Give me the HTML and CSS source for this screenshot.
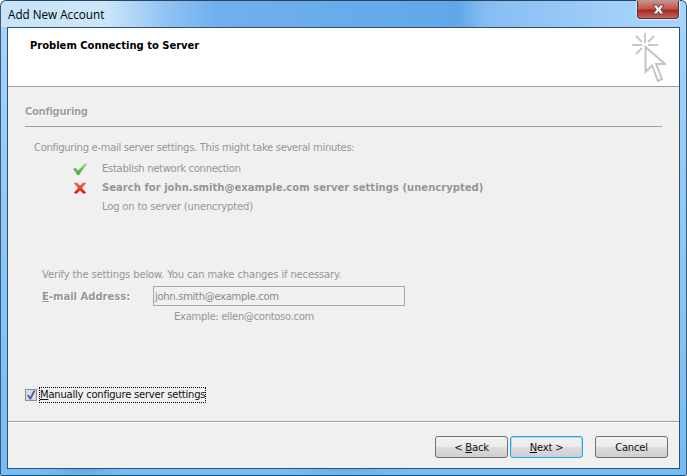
FILE: index.html
```html
<!DOCTYPE html>
<html lang="en">
<head>
<meta charset="utf-8">
<title>Add New Account</title>
<link rel="stylesheet" href="styles.css">
</head>
<body>
<div class="window">
  <div class="titlebar">
    <span class="title">Add New Account</span>
    <div class="close">
      <svg width="19" height="11" viewBox="0 0 19 11"><path d="M4 1h4l1.500 2.500L11 1h4l-3.200 4.500L15 10h-4L9.500 7.500 8 10H4l3.200-4.500z" fill="#f4f4f4" stroke="#5a4a4a" stroke-width="1"/></svg>
    </div>
  </div>
  <div class="client">
    <header class="banner">
      <h1 class="banner-title">Problem Connecting to Server</h1>
      <svg class="banner-icon" width="34" height="50" viewBox="0 0 34 50" fill="none">
        <path d="M13 0v10M0 12h10M16 12h10M4 3l6 6M22 3l-6 6M4 21l6-6" stroke="#c8c8c8" stroke-width="2"/>
        <path d="M13.500 14V39L20 32.500 26 48l4-2-6-15H33z" fill="#fff" stroke="#c4c4c4" stroke-width="2"/>
      </svg>
    </header>
    <main class="content">
      <h2 class="section">Configuring</h2>
      <p class="intro">Configuring e-mail server settings. This might take several minutes:</p>
      <ul class="tasks">
        <li class="task">
          <svg class="mark" width="14" height="12" viewBox="0 0 14 12">
            <defs><linearGradient id="okfill" x1="0" y1="0" x2="0" y2="1"><stop offset="0" stop-color="#98da80"/><stop offset="1" stop-color="#40ac38"/></linearGradient></defs>
            <path d="M0 6l2.500-1.500 2.500 3L12.500 0 14 1 6 12H4.500z" fill="url(#okfill)"/>
          </svg>
          <span>Establish network connection</span>
        </li>
        <li class="task task-bold">
          <svg class="mark" width="14" height="12" viewBox="0 0 14 12">
            <defs><linearGradient id="errfill" x1="0" y1="0" x2="0" y2="1"><stop offset="0" stop-color="#f47058"/><stop offset="1" stop-color="#e01808"/></linearGradient></defs>
            <path d="M2 .5l2 0L7 3.500 10 .5h2L13 1.500 9 6l4 4.500-1 1H10L7 8.500 4 11.500H2l-1-1L5 6 1 1.500z" fill="url(#errfill)"/>
          </svg>
          <span>Search for john.smith@example.com server settings (unencrypted)</span>
        </li>
        <li class="task task-wide">
          <span class="mark"></span>
          <span>Log on to server (unencrypted)</span>
        </li>
      </ul>
      <section class="verify">
        <p class="verify-text">Verify the settings below. You can make changes if necessary.</p>
        <div class="field">
          <label class="field-label"><u>E</u>-mail Address:</label>
          <div class="input">john.smith@example.com</div>
        </div>
        <p class="hint">Example: ellen@contoso.com</p>
      </section>
      <label class="manual">
        <span class="checkbox">
          <svg width="10" height="10" viewBox="0 0 10 10"><path d="M1 5l2 0 1.200 2L7.500 .5h2L5 9.500H3.500z" fill="#4a5ea8"/></svg>
        </span>
        <span class="manual-text"><u>M</u>anually configure server settings</span>
      </label>
    </main>
    <footer class="footer">
      <button class="btn btn-back">&lt; <u>B</u>ack</button>
      <button class="btn btn-default"><u>N</u>ext &gt;</button>
      <button class="btn btn-cancel">Cancel</button>
    </footer>
  </div>
</div>
</body>
</html>
```
FILE: styles.css
```css
* { box-sizing: border-box; }
html, body { margin: 0; padding: 0; }
body { width: 687px; height: 476px; overflow: hidden; }
.window {
  width: 687px; height: 476px;
  display: flex; flex-direction: column;
  padding: 0 6px 6px 6px;
  border: 1px solid #3a5a74;
  border-top-color: #2a4560;
  border-bottom-color: #1f5068;
  border-radius: 6px 6px 2px 2px;
  background:
    radial-gradient(ellipse 40px 8px at 80px 469px, #5fa8ea, transparent),
    radial-gradient(ellipse 60px 8px at 345px 469px, #6aaeea, transparent),
    linear-gradient(#a8d4fb 0, #8cc8f8 50%, #74bcf8 100%);
  font-family: "DejaVu Sans", sans-serif;
}
.titlebar {
  height: 26px; flex: none;
  margin: 0 -6px 0 -6px; padding-left: 7px;
  display: flex; justify-content: space-between; align-items: flex-start;
  border-radius: 6px 6px 0 0;
  background: linear-gradient(90deg, #c8e4f8 0, #cbe6f9 105px, #8fc4f3 165px, #70b0ee 215px, #62a8ea 440px, #60a6e8 455px, #86bdf2 485px, #a8d4fb 650px, #a8d4fb 100%);
}
.title {
  font-family: "Open Sans", sans-serif;
  font-size: 11.700px; line-height: 26px; color: #000;
}
.close {
  width: 42px; height: 18px; margin-right: 7px;
  display: flex; align-items: center; justify-content: center;
  border: 1px solid #4a3434; border-top: 0;
  border-radius: 0 0 4px 4px;
  background: linear-gradient(#d88c80 0, #c0564a 45%, #a82a20 55%, #c4665a 100%);
  box-shadow: 0 0 0 1px rgba(255,255,255,.5);
}
.client {
  flex: 1; min-height: 0;
  display: flex; flex-direction: column;
  background: #f0f0f0;
  border: 1px solid #33506a;
  font-size: 10px; letter-spacing: -0.3px; color: #969696;
}
.banner {
  height: 59px; flex: none;
  display: flex; justify-content: space-between; align-items: flex-start;
  background: #fff;
  border-bottom: 1px solid #a0a0a0;
  padding: 5px 13px 0 22px;
}
.banner-title {
  margin: 6px 0 0; font-size: 10px; line-height: 14px; font-weight: bold; letter-spacing: -0.02px; color: #000;
}
.content {
  flex: 1; min-height: 0;
  display: flex; flex-direction: column;
  padding: 17px 17px 0 17px;
}
.section {
  margin: 0; font-size: 10px; line-height: 16px; font-weight: bold; color: #a0a0a0;
  padding-bottom: 6px;
  border-bottom: 1px solid #a0a0a0;
  text-shadow: 1px 1px 0 #fff;
}
.intro { margin: 14px 0 0 9px; line-height: 14px; }
.tasks { list-style: none; margin: 4px 0 0 48px; padding: 0; }
.task { display: flex; align-items: center; height: 19px; gap: 15px; }
.task-bold { font-weight: bold; letter-spacing: 0.03px; }
.task-wide { letter-spacing: -0.17px; }
.mark { width: 14px; flex: none; }
.verify { margin: 0 0 0 17px; padding-top: 52px; }
.verify-text { margin: 0; line-height: 14px; letter-spacing: -0.15px; }
.field { display: flex; align-items: center; margin-top: 4px; }
.field-label { width: 111px; font-weight: bold; letter-spacing: 0; text-shadow: 1px 1px 0 #fff; }
.input {
  width: 252px; height: 20px;
  border: 1px solid #a8a8a8; background: #f0f0f0;
  padding-left: 1px; line-height: 20px; color: #8a8a8a;
}
.hint { margin: 4px 0 0 132px; line-height: 14px; }
.manual { display: flex; align-items: center; margin-top: 64px; gap: 3px; color: #111; letter-spacing: -0.23px; }
.checkbox {
  width: 12px; height: 12px; border: 1px solid #8f8f8f; background: #d8dce4;
  display: flex; align-items: center; justify-content: center;
}
.manual-text { outline: 1px dotted #000; line-height: 14px; }
.footer {
  height: 47px; flex: none;
  display: flex; align-items: flex-start;
  border-top: 1px solid #a0a0a0;
  box-shadow: inset 0 1px 0 #fff;
  padding: 14px 11px 0 427px;
}
.btn {
  width: 73px; height: 22px; padding: 0;
  font-family: inherit; font-size: 10px; letter-spacing: -0.2px; color: #111;
  border: 1px solid #707070; border-radius: 3px;
  background: linear-gradient(#f2f2f2 0, #ebebeb 48%, #dcdcdc 52%, #cfcfcf 100%);
}
.btn-default { margin-left: 2px; border-color: #3c9fd0; box-shadow: inset 0 0 0 1px #9fdcf5; }
.btn-cancel { margin-left: 12px; }
```
